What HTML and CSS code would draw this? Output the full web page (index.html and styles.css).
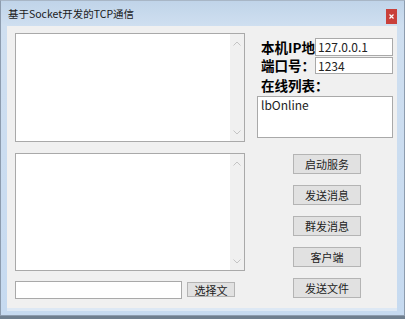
FILE: index.html
```html
<!DOCTYPE html>
<html lang="zh-CN">
<head>
  <meta charset="UTF-8" />
  <title>基于Socket开发的TCP通信</title>
  <link rel="stylesheet" href="styles.css">
</head>
<body>
  <div class="window">
    <div class="titlebar">
      <span class="title">基于Socket开发的TCP通信</span>
      <span class="close">
        <svg width="5" height="5" viewBox="0 0 5 5"><path d="M0.5 0.5 L4.5 4.5 M4.5 0.5 L0.5 4.5" stroke="#fff" stroke-width="1.2"/></svg>
      </span>
    </div>

    <div class="client">
      <!-- left column -->
      <div class="left">
        <div class="memo memo-top">
          <div class="vscroll">
            <svg width="8" height="5" viewBox="0 0 8 5"><polyline points="0.5,4.5 4,1 7.5,4.5" fill="none" stroke="#c4c4c4" stroke-width="1"/></svg>
            <svg width="8" height="5" viewBox="0 0 8 5"><polyline points="0.5,0.5 4,4 7.5,0.5" fill="none" stroke="#c4c4c4" stroke-width="1"/></svg>
          </div>
        </div>
        <div class="memo memo-bottom">
          <div class="vscroll">
            <svg width="8" height="5" viewBox="0 0 8 5"><polyline points="0.5,4.5 4,1 7.5,4.5" fill="none" stroke="#c4c4c4" stroke-width="1"/></svg>
            <svg width="8" height="5" viewBox="0 0 8 5"><polyline points="0.5,0.5 4,4 7.5,0.5" fill="none" stroke="#c4c4c4" stroke-width="1"/></svg>
          </div>
        </div>
        <div class="file-row">
          <div class="textbox file-path"></div>
          <button class="btn btn-small">选择文</button>
        </div>
      </div>

      <!-- right column -->
      <div class="right">
        <div class="field">
          <span class="label label-ip">本机IP地址</span>
          <div class="textbox field-input">127.0.0.1</div>
        </div>
        <div class="field field-port">
          <span class="label label-port">端口号：</span>
          <div class="textbox field-input">1234</div>
        </div>
        <div class="label label-list">在线列表：</div>
        <div class="listbox">lbOnline</div>

        <div class="buttons">
          <button class="btn">启动服务</button>
          <button class="btn">发送消息</button>
          <button class="btn">群发消息</button>
          <button class="btn">客户端</button>
          <button class="btn">发送文件</button>
        </div>
      </div>
    </div>
  </div>
</body>
</html>
```

FILE: styles.css
```css
* {
  box-sizing: border-box;
}

body {
  margin: 0;
  width: 405px;
  height: 319px;
  overflow: hidden;
  font-family: "Noto Sans CJK SC", "Noto Sans", sans-serif;
  font-size: 12px;
  color: #000;
  background: #6f7f8f;
}

.window {
  width: 405px;
  height: 316px;
  border: 1px solid #8d9cae;
  border-top-color: #a8b6c6;
  background: linear-gradient(to bottom, #c0d4e9 0px, #cfdff0 25px, #c6daf0 100%);
  padding: 0 7px 4px 6px;
  display: flex;
  flex-direction: column;
}

.titlebar {
  height: 25px;
  display: flex;
  align-items: center;
  justify-content: space-between;
  flex-shrink: 0;
}

.title {
  padding-left: 1px;
  font-size: 10.5px;
  color: #1a1a1a;
}

.close {
  width: 11px;
  height: 15px;
  margin-top: 5px;
  background: #c9403a;
  display: flex;
  align-items: center;
  justify-content: center;
}

.client {
  flex: 1;
  background: #f0f0f0;
  border-bottom: 3px solid #dde8f4;
  display: flex;
  padding: 7px 0 0 8px;
}

.left {
  width: 230px;
  display: flex;
  flex-direction: column;
}

.memo {
  background: #fff;
  border: 1px solid #a9a9a9;
  display: flex;
  justify-content: flex-end;
}

.memo-top {
  height: 109px;
}

.memo-bottom {
  height: 118px;
  margin-top: 11px;
}

.vscroll {
  width: 14px;
  background: #f0f0f0;
  display: flex;
  flex-direction: column;
  justify-content: space-between;
  align-items: center;
  padding: 7px 0 6px;
}

.file-row {
  display: flex;
  align-items: flex-start;
  gap: 5px;
  margin-top: 10px;
}

.textbox {
  background: #fff;
  border: 1px solid #a9a9a9;
}

.file-path {
  width: 167px;
  height: 18px;
}

.btn {
  font-family: "Noto Sans CJK SC", "Noto Sans", sans-serif;
  font-size: 11px;
  color: #222;
  background: #e1e1e1;
  border: 1px solid #b4b4b4;
  padding: 0;
  width: 68px;
  height: 20px;
  line-height: 17px;
}

.btn-small {
  width: 48px;
  height: 15px;
  line-height: 12px;
  margin-top: 1px;
}

.right {
  width: 136px;
  margin-left: 12px;
  padding-top: 5px;
  display: flex;
  flex-direction: column;
}

.field {
  display: flex;
  height: 18px;
  padding-left: 4px;
}

.field-port {
  height: 17px;
  margin-top: 1px;
}

.label {
  font-weight: bold;
  font-size: 13.5px;
  line-height: 18px;
  white-space: nowrap;
}

.field .label {
  width: 54px;
  flex-shrink: 0;
}

.label-ip {
  overflow: hidden;
}

.label-port {
  line-height: 17px;
}

.field-input {
  width: 78px;
  line-height: 16px;
  padding-left: 2px;
  font-size: 12px;
  color: #222;
}

.label-list {
  padding-left: 4px;
  margin-top: 2px;
  height: 18px;
}

.listbox {
  margin-top: 2px;
  height: 42px;
  background: #fff;
  border: 1px solid #a9a9a9;
  padding: 0 0 0 3px;
  line-height: 15px;
  font-size: 12px;
  color: #222;
}

.buttons {
  display: flex;
  flex-direction: column;
  gap: 11px;
  margin-top: 16px;
  padding-left: 36px;
}
```
